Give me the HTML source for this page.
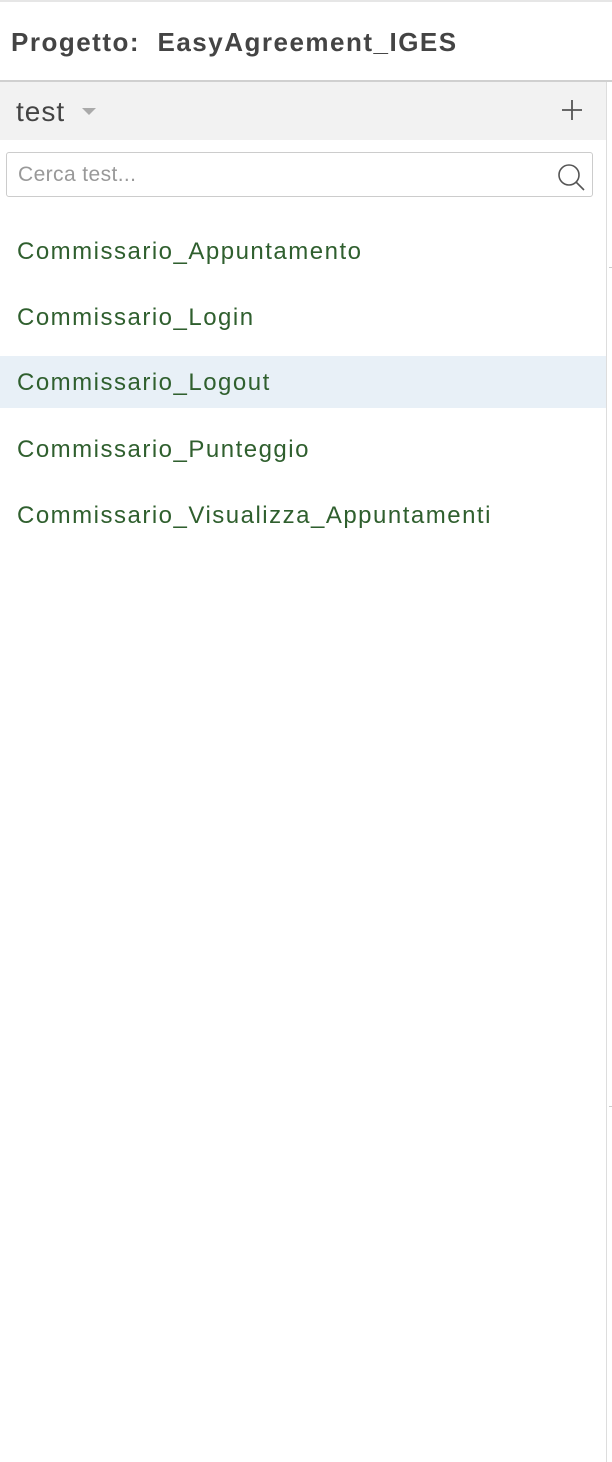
<!DOCTYPE html>
<html><head><style>
body{margin:0;width:612px;height:1462px;background:#fff;font-family:"Liberation Sans",sans-serif;position:relative;overflow:hidden}
.t{position:absolute;left:11px;top:27px;font-size:26px;font-weight:bold;color:#444;letter-spacing:1.5px}
.item{position:absolute;left:0;width:606px;height:52px;line-height:52px;padding-left:17px;box-sizing:border-box;font-size:24px;letter-spacing:1.5px;color:#2f5f2e}
.item span{position:relative;top:1px}
</style></head><body>
<div style="position:absolute;left:0;top:0;width:612px;height:2px;background:#e6e6e6"></div>
<div class="t">Progetto:&nbsp; EasyAgreement_IGES</div>
<div style="position:absolute;left:0;top:80px;width:612px;height:2px;background:#d0d0d0"></div>
<div style="position:absolute;left:0;top:82px;width:606px;height:58px;background:#f2f2f2"></div>
<div style="position:absolute;left:606px;top:82px;width:1px;height:1380px;background:#ddd"></div>
<div style="position:absolute;left:609px;top:267px;width:3px;height:1px;background:#ccc"></div>
<div style="position:absolute;left:609px;top:1106px;width:3px;height:1px;background:#ccc"></div>
<div style="position:absolute;left:16px;top:96px;font-size:28px;letter-spacing:1px;color:#444">test</div>
<div style="position:absolute;left:82px;top:108px;width:0;height:0;border-left:7px solid transparent;border-right:7px solid transparent;border-top:7px solid #aaa"></div>
<svg style="position:absolute;left:560px;top:98px" width="24" height="24"><path d="M12 2V22M2 12H22" stroke="#555" stroke-width="1.8"/></svg>
<div style="position:absolute;left:6px;top:152px;width:587px;height:45px;border:1.5px solid #ccc;border-radius:3px;box-sizing:border-box"></div>
<div style="position:absolute;left:18px;top:163px;font-size:21px;letter-spacing:0.4px;color:#999">Cerca test...</div>
<svg style="position:absolute;left:556px;top:162px" width="32" height="30"><circle cx="13" cy="13" r="10" fill="none" stroke="#555" stroke-width="1.6"/><path d="M20 20L28 28" stroke="#555" stroke-width="1.6"/></svg>
<div class="item" style="top:225px"><span>Commissario_Appuntamento</span></div>
<div class="item" style="top:291px"><span>Commissario_Login</span></div>
<div class="item" style="top:356px;background:#e8f0f7"><span>Commissario_Logout</span></div>
<div class="item" style="top:423px"><span>Commissario_Punteggio</span></div>
<div class="item" style="top:489px"><span>Commissario_Visualizza_Appuntamenti</span></div>
</body></html>
